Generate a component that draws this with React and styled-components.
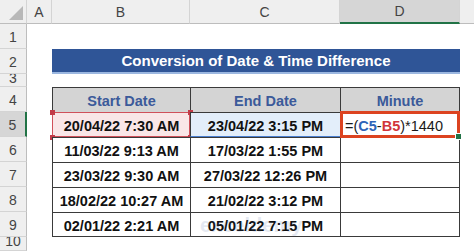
import React from 'react';
import styled, { createGlobalStyle } from 'styled-components';

const GlobalStyle = createGlobalStyle`
  html, body {
    margin: 0;
    padding: 0;
    background: #ffffff;
    overflow: hidden;
  }
  body {
    font-family: "Liberation Sans", Arial, sans-serif;
  }
`;

const rows = [
  ['20/04/22 7:30 AM', '23/04/22 3:15 PM'],
  ['11/03/22 9:13 AM', '17/03/22 1:55 PM'],
  ['23/03/22 9:30 AM', '27/03/22 12:26 PM'],
  ['18/02/22 10:27 AM', '21/02/22 3:12 PM'],
  ['02/01/22 2:21 AM', '05/01/22 7:15 PM'],
];

const rowHeights = [25, 25, 13, 25, 25, 25, 25, 25, 25, 14];

const App = () => {
  return (
    <>
      <GlobalStyle />
      <Sheet>
        <Corner>
          <svg width="14" height="14" viewBox="0 0 14 14">
            <polygon points="14,0 14,14 0,14" fill="#b8b8b8" />
          </svg>
        </Corner>
        {['A', 'B', 'C', 'D', ''].map((c, i) => (
          <ColHead key={c + i} $col={i + 2} $active={c === 'D'} $last={i === 4}>
            {c}
          </ColHead>
        ))}
        {rowHeights.map((h, i) => (
          <RowHead key={i} $row={i + 2} $active={i === 4} $short={h < 20}>
            {i + 1}
          </RowHead>
        ))}

        <Title>Conversion of Date &amp; Time Difference</Title>

        <HeadCell $row={5} $col={3}>Start Date</HeadCell>
        <HeadCell $row={5} $col={4}>End Date</HeadCell>
        <HeadCell $row={5} $col={5} $right>Minute</HeadCell>

        {rows.map((r, i) => {
          const row = i + 6;
          const first = i === 0;
          const last = i === rows.length - 1;
          return (
            <React.Fragment key={i}>
              <DataCell $row={row} $col={3} $bottom={last} $variant={first ? 'start' : ''}>
                {r[0]}
                {first && (
                  <>
                    <Handle $x="left" $y="top" />
                    <Handle $x="right" $y="top" />
                    <Handle $x="left" $y="bottom" />
                    <Handle $x="right" $y="bottom" />
                  </>
                )}
              </DataCell>
              <DataCell $row={row} $col={4} $bottom={last} $variant={first ? 'end' : ''}>
                {r[1]}
              </DataCell>
              {first ? (
                <FormulaCell $row={row} $col={5}>
                  =(<Ref $color="#2e64b8">C5</Ref>-<Ref $color="#d1353a">B5</Ref>)*1440
                  <FillHandle />
                </FormulaCell>
              ) : (
                <DataCell $row={row} $col={5} $bottom={last} $right />
              )}
            </React.Fragment>
          );
        })}

        <Watermark>exceldemy</Watermark>
      </Sheet>
    </>
  );
};

export default App;

const Sheet = styled.div`
  position: relative;
  display: grid;
  grid-template-columns: 27px 25px 138px 150px 120px 14px;
  grid-template-rows: 24px ${rowHeights.map(h => `${h}px`).join(' ')};
  width: 474px;
  height: 251px;
  background: #ffffff;
  overflow: hidden;
`;

const Corner = styled.div`
  grid-row: 1;
  grid-column: 1;
  display: flex;
  align-items: flex-end;
  justify-content: flex-end;
  padding: 0 3px 3px 0;
  box-sizing: border-box;
  background: #efefef;
  border-right: 1px solid #d4d4d4;
  border-bottom: 1px solid #bdbdbd;
`;

const ColHead = styled.div`
  grid-row: 1;
  grid-column: ${p => p.$col};
  display: flex;
  align-items: center;
  justify-content: center;
  box-sizing: border-box;
  background: ${p => (p.$active ? '#d6d6d6' : '#efefef')};
  border-right: ${p => (p.$last ? 'none' : '1px solid #d4d4d4')};
  border-bottom: ${p => (p.$active ? '2px solid #217346' : '1px solid #bdbdbd')};
  color: #444444;
  font-size: 14px;
`;

const RowHead = styled.div`
  grid-column: 1;
  grid-row: ${p => p.$row};
  display: flex;
  align-items: ${p => (p.$short ? 'flex-start' : 'center')};
  justify-content: center;
  box-sizing: border-box;
  padding-top: ${p => (p.$short ? '0' : '2px')};
  line-height: ${p => (p.$short ? '9px' : 'normal')};
  overflow: hidden;
  background: ${p => (p.$active ? '#d6d6d6' : '#efefef')};
  border-bottom: 1px solid #d4d4d4;
  border-right: ${p => (p.$active ? '2px solid #217346' : '1px solid #bdbdbd')};
  color: #444444;
  font-size: 14px;
`;

const Title = styled.div`
  grid-row: 3;
  grid-column: 3 / 6;
  display: flex;
  align-items: center;
  justify-content: center;
  box-sizing: border-box;
  background: #2f5597;
  border-bottom: 2px solid #9bb7e0;
  color: #ffffff;
  font-weight: bold;
  font-size: 15px;
`;

const HeadCell = styled.div`
  grid-row: ${p => p.$row};
  grid-column: ${p => p.$col};
  display: flex;
  align-items: center;
  justify-content: center;
  box-sizing: border-box;
  background: #d4d4d4;
  border-top: 1px solid #3a3a3a;
  border-left: 1px solid #3a3a3a;
  border-right: ${p => (p.$right ? '1px solid #3a3a3a' : 'none')};
  color: #3b5a9a;
  font-weight: bold;
  font-size: 14.5px;
  padding-top: 2px;
`;

const variants = {
  start: 'background: #f9e6e7; outline: 1px solid #d0505a; outline-offset: -1px;',
  end: 'background: #e3eefa; border-bottom: 1px solid #4a7fd0;',
};

const DataCell = styled.div`
  position: relative;
  grid-row: ${p => p.$row};
  grid-column: ${p => p.$col};
  display: flex;
  align-items: center;
  justify-content: center;
  box-sizing: border-box;
  background: #ffffff;
  border-top: 1px solid #3a3a3a;
  border-left: 1px solid #3a3a3a;
  border-right: ${p => (p.$right ? '1px solid #3a3a3a' : 'none')};
  border-bottom: ${p => (p.$bottom ? '1px solid #3a3a3a' : 'none')};
  color: #111111;
  font-weight: bold;
  font-size: 14.5px;
  white-space: nowrap;
  padding-top: 2px;
  ${p => variants[p.$variant] || ''}
`;

const Handle = styled.span`
  position: absolute;
  width: 5px;
  height: 5px;
  background: #c23b48;
  ${p => (p.$x === 'left' ? 'left: -3px;' : 'right: -3px;')}
  ${p => (p.$y === 'top' ? 'top: -3px;' : 'bottom: -3px;')}
`;

const FormulaCell = styled.div`
  position: relative;
  grid-row: ${p => p.$row};
  grid-column: ${p => p.$col};
  display: flex;
  align-items: center;
  box-sizing: border-box;
  margin: -1px 0 -1px 0;
  padding: 2px 0 0 2px;
  border: 3px solid #dc4320;
  background: #ffffff;
  color: #1a1a1a;
  font-size: 14.5px;
  white-space: nowrap;
  z-index: 1;
`;

const Ref = styled.span`
  color: ${p => p.$color};
  font-weight: bold;
`;

const FillHandle = styled.span`
  position: absolute;
  right: -5px;
  bottom: -5px;
  width: 5px;
  height: 5px;
  background: #217346;
  border: 1px solid #ffffff;
`;

const Watermark = styled.div`
  position: absolute;
  left: 200px;
  top: 214px;
  color: #2f5597;
  opacity: 0.12;
  font-size: 20px;
  font-weight: bold;
  pointer-events: none;
`;
